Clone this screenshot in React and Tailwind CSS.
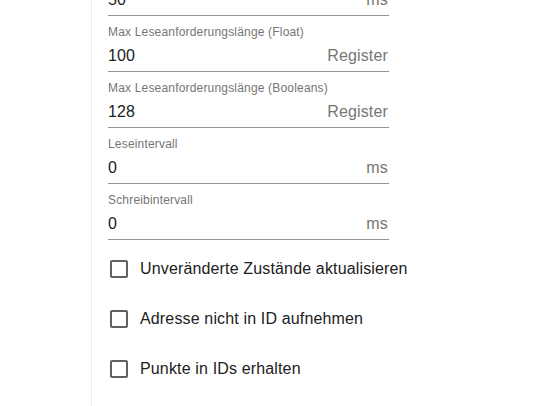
import React from "react";

const fields = [
  { label: "Max Leseanforderungslänge (Register)", value: "50", unit: "ms" },
  { label: "Max Leseanforderungslänge (Float)", value: "100", unit: "Register" },
  { label: "Max Leseanforderungslänge (Booleans)", value: "128", unit: "Register" },
  { label: "Leseintervall", value: "0", unit: "ms" },
  { label: "Schreibintervall", value: "0", unit: "ms" },
];

const checks = [
  "Unveränderte Zustände aktualisieren",
  "Adresse nicht in ID aufnehmen",
  "Punkte in IDs erhalten",
];

function Field({ label, value, unit }) {
  return (
    <div className="flex h-[56px] w-[281px] flex-col border-b border-[#949494] pt-[10px] pb-[5px]">
      <div className="text-[12px] leading-[12px] tracking-[0.18px] text-[#757575]">{label}</div>
      <div className="mt-[8px] flex h-[20px] items-center justify-between text-[16px] leading-[20px] tracking-[0.15px]">
        <span className="text-[#212121]">{value}</span>
        <span className="pr-[1px] text-[#757575]">{unit}</span>
      </div>
    </div>
  );
}

function Check({ label }) {
  return (
    <div className="flex h-[42px] items-center">
      <div className="flex h-[42px] w-[42px] items-center justify-center">
        <svg width="24" height="24" viewBox="0 0 24 24" fill="#616161">
          <path d="M19 5v14H5V5h14m0-2H5c-1.11 0-2 .9-2 2v14c0 1.1.89 2 2 2h14c1.1 0 2-.9 2-2V5c0-1.1-.9-2-2-2z" />
        </svg>
      </div>
      <span className="text-[16px] leading-[20px] tracking-[0.15px] text-[#212121]">{label}</span>
    </div>
  );
}

export default function App() {
  return (
    <div
      className="flex h-[406px] w-[557px] overflow-hidden bg-white"
      style={{ fontFamily: '"Liberation Sans", Arial, sans-serif' }}
    >
      <div className="w-[92px] shrink-0 border-r border-[#ececec]" />
      <div className="flex flex-col pl-[16px]">
        <div className="-mt-[40px] flex flex-col">
          {fields.map((f) => (
            <Field key={f.label} {...f} />
          ))}
        </div>
        <div className="-ml-[10px] mt-[8px] flex flex-col gap-[8px]">
          {checks.map((c) => (
            <Check key={c} label={c} />
          ))}
        </div>
      </div>
    </div>
  );
}
